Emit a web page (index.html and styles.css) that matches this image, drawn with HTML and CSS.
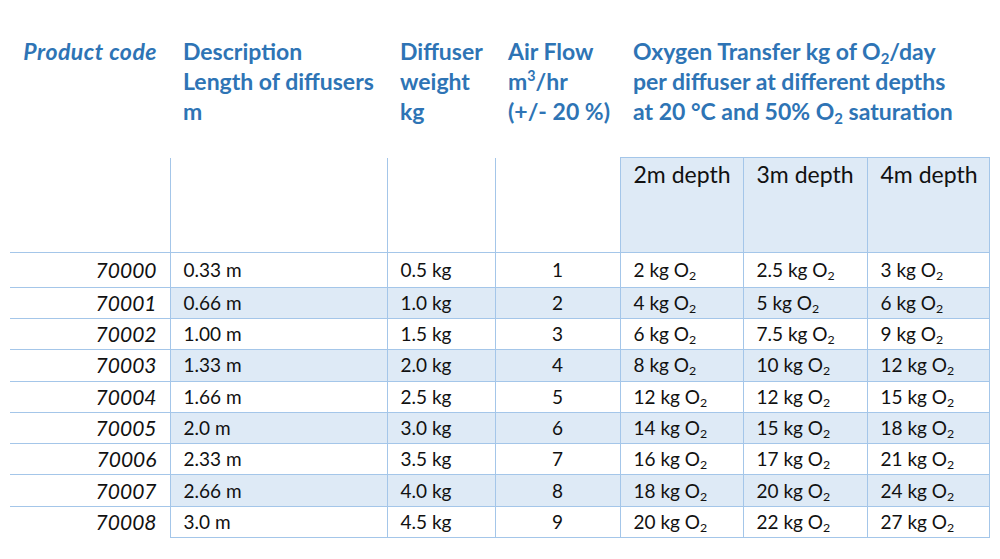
FILE: index.html
```html
<!DOCTYPE html>
<html>
<head>
<meta charset="utf-8">
<link rel="stylesheet" href="styles.css">
</head>
<body>
<div class="page">
<table class="spec">
  <colgroup>
    <col class="c-code"><col class="c-desc"><col class="c-weight"><col class="c-air"><col class="c-d2"><col class="c-d3"><col class="c-d4">
  </colgroup>
  <thead>
    <tr class="head-text">
      <th class="code-h">Product code</th>
      <th>Description<br>Length of diffusers<br>m</th>
      <th>Diffuser<br>weight<br>kg</th>
      <th>Air Flow<br>m<sup>3</sup>/hr<br>(+/- 20 %)</th>
      <th colspan="3">Oxygen Transfer kg of O<sub>2</sub>/day<br>per diffuser at different depths<br>at 20 °C and 50% O<sub>2</sub> saturation</th>
    </tr>
    <tr class="head-depth">
      <td class="code"></td>
      <td class="blank"></td>
      <td class="blank"></td>
      <td class="blank"></td>
      <td class="depth">2m depth</td>
      <td class="depth">3m depth</td>
      <td class="depth">4m depth</td>
    </tr>
  </thead>
  <tbody>
    <tr class="first"><td class="code">70000</td><td>0.33 m</td><td>0.5 kg</td><td class="air">1</td><td>2 kg O<sub>2</sub></td><td>2.5 kg O<sub>2</sub></td><td>3 kg O<sub>2</sub></td></tr>
    <tr class="alt"><td class="code">70001</td><td>0.66 m</td><td>1.0 kg</td><td class="air">2</td><td>4 kg O<sub>2</sub></td><td>5 kg O<sub>2</sub></td><td>6 kg O<sub>2</sub></td></tr>
    <tr><td class="code">70002</td><td>1.00 m</td><td>1.5 kg</td><td class="air">3</td><td>6 kg O<sub>2</sub></td><td>7.5 kg O<sub>2</sub></td><td>9 kg O<sub>2</sub></td></tr>
    <tr class="alt"><td class="code">70003</td><td>1.33 m</td><td>2.0 kg</td><td class="air">4</td><td>8 kg O<sub>2</sub></td><td>10 kg O<sub>2</sub></td><td>12 kg O<sub>2</sub></td></tr>
    <tr><td class="code">70004</td><td>1.66 m</td><td>2.5 kg</td><td class="air">5</td><td>12 kg O<sub>2</sub></td><td>12 kg O<sub>2</sub></td><td>15 kg O<sub>2</sub></td></tr>
    <tr class="alt"><td class="code">70005</td><td>2.0 m</td><td>3.0 kg</td><td class="air">6</td><td>14 kg O<sub>2</sub></td><td>15 kg O<sub>2</sub></td><td>18 kg O<sub>2</sub></td></tr>
    <tr><td class="code">70006</td><td>2.33 m</td><td>3.5 kg</td><td class="air">7</td><td>16 kg O<sub>2</sub></td><td>17 kg O<sub>2</sub></td><td>21 kg O<sub>2</sub></td></tr>
    <tr class="alt"><td class="code">70007</td><td>2.66 m</td><td>4.0 kg</td><td class="air">8</td><td>18 kg O<sub>2</sub></td><td>20 kg O<sub>2</sub></td><td>24 kg O<sub>2</sub></td></tr>
    <tr class="last"><td class="code">70008</td><td>3.0 m</td><td>4.5 kg</td><td class="air">9</td><td>20 kg O<sub>2</sub></td><td>22 kg O<sub>2</sub></td><td>27 kg O<sub>2</sub></td></tr>
  </tbody>
</table>
</div>
</body>
</html>
```
FILE: styles.css
```css
html, body {
  margin: 0;
  padding: 0;
  background: #ffffff;
}
.page {
  padding: 36px 0 0 10px;
  font-family: Lato, "Liberation Sans", sans-serif;
  color: #111111;
}
.spec {
  border-collapse: collapse;
  table-layout: fixed;
  width: 979px;
}
.c-code { width: 160px; }
.c-desc { width: 217px; }
.c-weight { width: 108px; }
.c-air { width: 125px; }
.c-d2 { width: 123px; }
.c-d3 { width: 124px; }
.c-d4 { width: 122px; }

.head-text th {
  height: 121px;
  padding: 0 0 0 13px;
  vertical-align: top;
  text-align: left;
  font-weight: 700;
  font-size: 23px;
  line-height: 30px;
  color: #2e74b5;
  white-space: nowrap;
}
.head-text th.code-h {
  font-style: italic;
  text-align: right;
  padding: 0 13px 0 0;
  letter-spacing: 0.5px;
}
.head-text sup {
  font-size: 0.62em;
  line-height: 0;
  vertical-align: 0.6em;
}
.head-text sub, td sub {
  font-size: 0.65em;
  line-height: 0;
  vertical-align: -0.28em;
}

.head-depth td {
  height: 91px;
  padding: 3px 0 0 13px;
  vertical-align: top;
  font-size: 23px;
  line-height: 26px;
}
.head-depth .code {
  border-bottom: 1px solid #a4c6e9;
}
.head-depth .blank {
  border-left: 1px solid #a4c6e9;
  border-right: 1px solid #a4c6e9;
  border-bottom: 1px solid #a4c6e9;
}
.head-depth .depth {
  background: #deeaf6;
  border: 1px solid #a4c6e9;
}

tbody td {
  height: 30.3px;
  padding: 0 0 0 13px;
  vertical-align: middle;
  font-size: 19px;
  line-height: 22px;
  border: 1px solid #a4c6e9;
  white-space: nowrap;
}
tbody tr.first td {
  height: 33.7px;
}
tbody td.code {
  border-left: none;
  text-align: right;
  padding: 0 13px 0 0;
  font-style: italic;
  font-size: 21px;
  background: #ffffff;
}
tbody tr.last td.code {
  border-bottom: none;
}
tbody td.air {
  text-align: center;
  padding-left: 0;
}
tbody tr.alt td {
  background: #deeaf6;
}
tbody tr.alt td.code {
  background: #ffffff;
}
```
